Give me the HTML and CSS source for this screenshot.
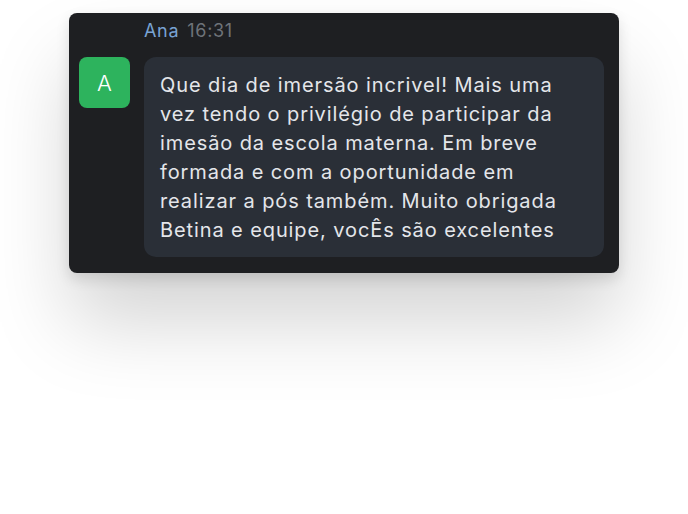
FILE: index.html
```html
<!DOCTYPE html>
<html>
<head>
<meta charset="utf-8">
<link rel="stylesheet" href="styles.css">
</head>
<body>
<div class="page">
  <div class="card">
    <div class="header"><span class="name">Ana</span><span class="time">16:31</span></div>
    <div class="row">
      <div class="avatar">A</div>
      <div class="bubble">Que dia de imersão incrivel! Mais uma vez tendo o privilégio de participar da imesão da escola materna. Em breve formada e com a oportunidade em realizar a pós também. Muito obrigada Betina e equipe, vocÊs são excelentes</div>
    </div>
  </div>
</div>
</body>
</html>
```

FILE: styles.css
```css
html, body {
  margin: 0;
  padding: 0;
  background: #ffffff;
}
body {
  min-height: 514px;
}
.page {
  padding: 13px 0 0 69px;
  min-height: 500px;
  font-family: Inter, "Noto Sans", sans-serif;
}
.card {
  width: 550px;
  box-sizing: border-box;
  background: #1e1f22;
  border-radius: 8px;
  padding: 8px 15px 16px 10px;
  box-shadow: 0 6px 14px rgba(0, 0, 0, 0.12), 0 50px 80px rgba(0, 0, 0, 0.17);
}
.header {
  margin-left: 65px;
  font-size: 18px;
  letter-spacing: 0.7px;
  line-height: 20px;
  height: 20px;
  margin-bottom: 16px;
  display: flex;
  gap: 8px;
}
.name {
  color: #79a3d4;
}
.time {
  color: #6e7379;
}
.row {
  display: flex;
  gap: 14px;
  align-items: flex-start;
}
.avatar {
  flex: 0 0 51px;
  height: 51px;
  border-radius: 8px;
  background: #2db35d;
  color: #ffffff;
  font-size: 22px;
  font-weight: 300;
  display: flex;
  align-items: center;
  justify-content: center;
}
.bubble {
  flex: 1;
  background: #2a2f37;
  border-radius: 12px;
  padding: 14px 26px 12px 16px;
  color: #e4e6ea;
  font-size: 20px;
  letter-spacing: 0.9px;
  line-height: 29px;
}
```
